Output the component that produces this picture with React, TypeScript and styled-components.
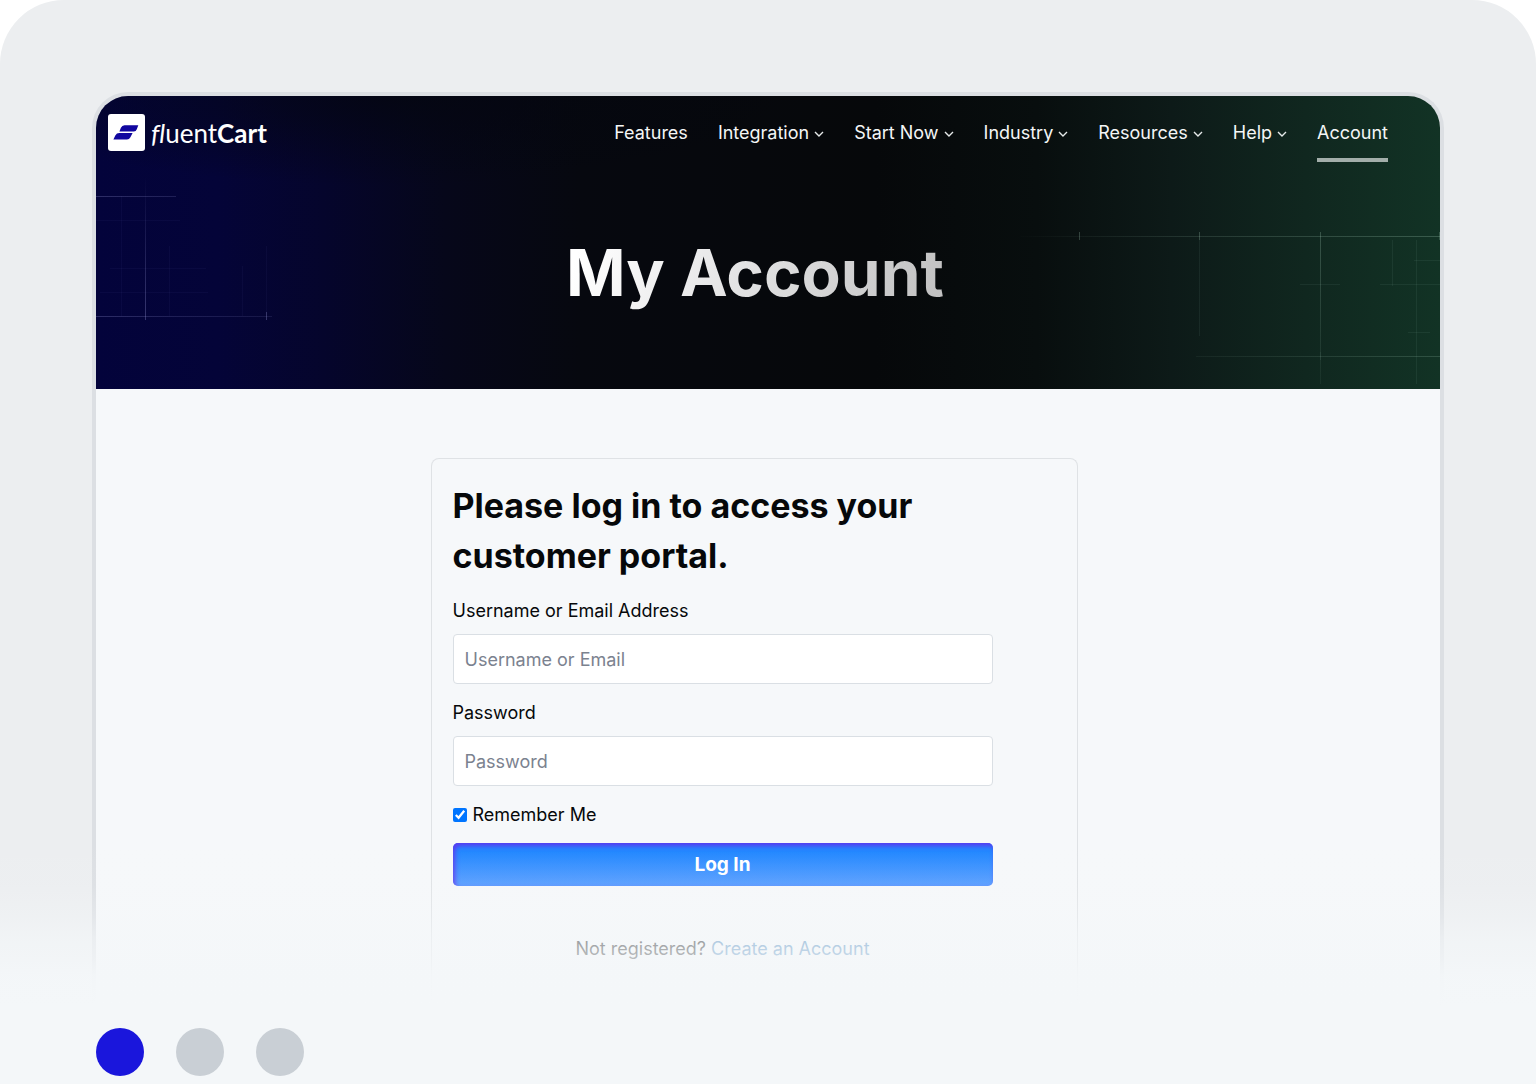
import React from "react";
import styled, { createGlobalStyle, css } from "styled-components";

const GlobalStyle = createGlobalStyle`
  *, *::before, *::after { box-sizing: border-box; }
  body {
    margin: 0;
    background: #ffffff;
    color: #06080a;
    font: 400 18px/24px Inter, "Open Sans", sans-serif;
  }
`;

const Stage = styled.div`
  min-height: 100vh;
  display: flex;
  flex-direction: column;
  border-radius: 64px 64px 0 0;
  background: #eceef0;
  overflow: hidden;
`;

const Preview = styled.div`
  position: relative;
  padding: 92px 92px 0;
`;

const Frame = styled.div`
  border: 4px solid #dcdfe3;
  border-bottom: 0;
  border-radius: 36px 36px 0 0;
  background: #f6f8fa;
  overflow: hidden;
`;

const Fade = styled.div`
  position: absolute;
  inset: auto 0 0;
  height: 172px;
  pointer-events: none;
  background: linear-gradient(
    rgba(244, 247, 249, 0) 0%,
    rgba(244, 247, 249, 0.08) 26%,
    rgba(244, 247, 249, 0.32) 44%,
    rgba(244, 247, 249, 0.62) 57%,
    rgba(244, 247, 249, 0.74) 68%,
    rgba(244, 247, 249, 0.94) 79%,
    #f4f7f9 97%
  );
`;

const Hero = styled.header`
  position: relative;
  height: 293px;
  background:
    radial-gradient(ellipse 420px 90px at 22% 0, rgba(4, 6, 14, 0.7), transparent),
    linear-gradient(
      90deg,
      #03033b 0%,
      #040438 9%,
      #05052c 17%,
      #06071a 26%,
      #06080f 36%,
      #06080a 58%,
      #080e0e 70%,
      #0d1a18 80%,
      #10271f 90%,
      #123325 100%
    );
`;

const GridLines = styled.svg<{ $side: "left" | "right" }>`
  position: absolute;
  top: 0;
  ${(p) => (p.$side === "left" ? "left: 0;" : "right: 0;")}
`;

const HeroContent = styled.div`
  position: relative;
  display: flex;
  flex-direction: column;
  padding-right: 26px;
`;

const TopBar = styled.div`
  display: flex;
  align-items: center;
  justify-content: space-between;
  height: 73px;
  padding: 0 26px 0 12px;
`;

const Logo = styled.a`
  display: flex;
  align-items: center;
  gap: 6px;
  color: #ffffff;
  text-decoration: none;
  font: 400 26px/36px Lato, sans-serif;
  font-variant-ligatures: none;

  i { font-style: italic; }
  b { font-weight: 700; }
`;

const Menu = styled.nav`
  display: flex;
  align-items: center;
  gap: 30px;
`;

const MenuLink = styled.a<{ $active?: boolean }>`
  position: relative;
  display: flex;
  align-items: center;
  gap: 5px;
  color: #f4f6f6;
  text-decoration: none;
  white-space: nowrap;

  ${(p) =>
    p.$active &&
    css`
      &::after {
        content: "";
        position: absolute;
        inset: auto 0 -17px;
        height: 4px;
        background: #a3aeaa;
      }
    `}
`;

const Title = styled.h1`
  align-self: center;
  margin: 59px 0 0;
  font-size: 64px;
  line-height: 90px;
  font-weight: 700;
  color: transparent;
  background: linear-gradient(110deg, #ffffff 5%, #e4e4e5 45%, #bfbfbf 100%);
  background-clip: text;
  -webkit-background-clip: text;
`;

const Main = styled.main`
  display: flex;
  justify-content: center;
  padding: 69px 28px 0 0;
`;

const Card = styled.section`
  width: 100%;
  max-width: 647px;
  padding: 22px 21px 51px;
  border: 1px solid #dfe2e5;
  border-bottom: 0;
  border-radius: 8px 8px 0 0;
`;

const LoginForm = styled.form`
  display: flex;
  flex-direction: column;
  max-width: 540px;
`;

const Heading = styled.h2`
  margin: 0 0 18px;
  font-size: 34px;
  line-height: 50px;
  font-weight: 700;
`;

const Field = styled.div`
  display: flex;
  flex-direction: column;
  gap: 11px;
  margin-bottom: 17px;
`;

const Input = styled.input`
  height: 50px;
  padding: 0 11px;
  border: 1px solid #dadfe4;
  border-radius: 4px;
  background: #ffffff;
  color: #06080a;
  font: inherit;

  &::placeholder { color: #7b828f; opacity: 1; }
`;

const Remember = styled.label`
  display: flex;
  align-items: center;
  align-self: flex-start;
  gap: 6px;
  margin-bottom: 16px;
`;

const Checkbox = styled.input`
  width: 14px;
  height: 14px;
  margin: 0;
  accent-color: #0075ff;
`;

const Submit = styled.button`
  height: 43px;
  border: 0;
  border-radius: 5px;
  color: #ffffff;
  font: inherit;
  font-size: 19px;
  font-weight: 700;
  background: linear-gradient(#1f86ff 20%, #559cff);
  box-shadow: inset 2px 3px 5px #5a36f0;
`;

const Register = styled.p`
  margin: 51px 0 0;
  text-align: center;

  a { color: #3d7fb8; text-decoration: none; }
`;

const Pager = styled.div`
  flex: 1;
  display: flex;
  gap: 32px;
  padding: 16px 96px 8px;
  background: #f4f7f9;
`;

const Dot = styled.button<{ $active?: boolean }>`
  width: 48px;
  height: 48px;
  padding: 0;
  border: 0;
  border-radius: 50%;
  background: ${(p) => (p.$active ? "#1a16dc" : "#c9cfd5")};
`;

const menu = [
  { label: "Features" },
  { label: "Integration", sub: true },
  { label: "Start Now", sub: true },
  { label: "Industry", sub: true },
  { label: "Resources", sub: true },
  { label: "Help", sub: true },
  { label: "Account", active: true },
];

const Mark = () => (
  <svg width="37" height="37" viewBox="0 0 37 37" aria-hidden="true">
    <rect width="37" height="37" rx="3" fill="#fff" />
    <path
      fill="#10069f"
      d="M16.5 11.2H30.3L28.8 15.2Q28 17.4 25.8 17.4H11.4L12.9 13.8Q14 11.2 16.5 11.2ZM11.4 19H24.6L22.4 23.2Q21.3 25.4 19 25.4H5.4L7.3 21.4Q8.6 19 11.4 19Z"
    />
  </svg>
);

const Chevron = () => (
  <svg width="10" height="8" viewBox="0 0 10 8" fill="none" aria-hidden="true">
    <path d="M1 3L5 7L9 3" stroke="#e6eaea" strokeWidth="1.4" />
  </svg>
);

const LeftGrid = () => (
  <GridLines $side="left" width="180" height="293" viewBox="0 0 180 293" aria-hidden="true">
    <defs>
      <linearGradient id="lh" x1="0" x2="180" y1="0" y2="0" gradientUnits="userSpaceOnUse">
        <stop offset="0" stopColor="#9a9ad8" stopOpacity=".28" />
        <stop offset=".45" stopColor="#9a9ad8" stopOpacity=".18" />
        <stop offset="1" stopColor="#9a9ad8" stopOpacity=".12" />
      </linearGradient>
      <linearGradient id="lv" x1="0" x2="0" y1="80" y2="224" gradientUnits="userSpaceOnUse">
        <stop offset="0" stopColor="#9a9ad8" stopOpacity="0" />
        <stop offset="1" stopColor="#9a9ad8" stopOpacity=".34" />
      </linearGradient>
    </defs>
    <path fill="url(#lh)" d="M0 100H80V101H0ZM0 220H176V221H0Z" />
    <path fill="url(#lv)" d="M49 60H50V224H49ZM170 216H171V224H170Z" />
    <path
      stroke="#8a8ad0"
      strokeOpacity=".05"
      d="M0 124.5H84M14 172.5H110M4 196.5H112M25.5 100V220M73.5 150V220M146.5 170V220M170.5 150V216"
    />
  </GridLines>
);

const RightGrid = () => (
  <GridLines $side="right" width="430" height="293" viewBox="0 0 430 293" aria-hidden="true">
    <defs>
      <linearGradient id="rh" x1="0" x2="430" y1="0" y2="0" gradientUnits="userSpaceOnUse">
        <stop offset="0" stopColor="#a8d0bc" stopOpacity="0" />
        <stop offset=".4" stopColor="#a8d0bc" stopOpacity=".14" />
        <stop offset="1" stopColor="#a8d0bc" stopOpacity=".26" />
      </linearGradient>
      <linearGradient id="rl" x1="186" x2="430" y1="0" y2="0" gradientUnits="userSpaceOnUse">
        <stop offset="0" stopColor="#a8d0bc" stopOpacity=".06" />
        <stop offset="1" stopColor="#a8d0bc" stopOpacity=".2" />
      </linearGradient>
      <linearGradient id="rv" x1="0" x2="0" y1="136" y2="288" gradientUnits="userSpaceOnUse">
        <stop offset="0" stopColor="#a8d0bc" stopOpacity=".26" />
        <stop offset="1" stopColor="#a8d0bc" stopOpacity=".06" />
      </linearGradient>
    </defs>
    <path fill="url(#rh)" d="M10 140H430V141H10Z" />
    <path fill="url(#rl)" d="M186 260H430V261H186Z" />
    <path fill="url(#rv)" d="M69 136H70V144H69ZM189 136H190V144H189ZM310 136H311V288H310ZM429 136H430V144H429Z" />
    <path
      stroke="#a8d0bc"
      strokeOpacity=".08"
      d="M189.5 144V240M310.5 256V264M382.5 144V190M406.5 144V288M404 164.5H430M370 188.5H430M290 188.5H330M398 236.5H420"
    />
  </GridLines>
);

export default function App() {
  return (
    <>
      <GlobalStyle />
      <Stage>
        <Preview>
          <Frame>
            <Hero>
              <LeftGrid />
              <RightGrid />
              <HeroContent>
                <TopBar>
                  <Logo href="#">
                    <Mark />
                    <span>
                      <i>fl</i>uent<b>Cart</b>
                    </span>
                  </Logo>
                  <Menu>
                    {menu.map((item) => (
                      <MenuLink key={item.label} href="#" $active={item.active}>
                        {item.label}
                        {item.sub && <Chevron />}
                      </MenuLink>
                    ))}
                  </Menu>
                </TopBar>
                <Title>My Account</Title>
              </HeroContent>
            </Hero>
            <Main>
              <Card>
                <LoginForm onSubmit={(e) => e.preventDefault()}>
                  <Heading>Please log in to access your customer portal.</Heading>
                  <Field>
                    <label htmlFor="username">Username or Email Address</label>
                    <Input id="username" type="text" placeholder="Username or Email" />
                  </Field>
                  <Field>
                    <label htmlFor="password">Password</label>
                    <Input id="password" type="password" placeholder="Password" />
                  </Field>
                  <Remember>
                    <Checkbox type="checkbox" defaultChecked />
                    Remember Me
                  </Remember>
                  <Submit type="submit">Log In</Submit>
                  <Register>
                    Not registered? <a href="#">Create an Account</a>
                  </Register>
                </LoginForm>
              </Card>
            </Main>
          </Frame>
          <Fade />
        </Preview>
        <Pager>
          <Dot type="button" $active aria-label="Slide 1" />
          <Dot type="button" aria-label="Slide 2" />
          <Dot type="button" aria-label="Slide 3" />
        </Pager>
      </Stage>
    </>
  );
}
